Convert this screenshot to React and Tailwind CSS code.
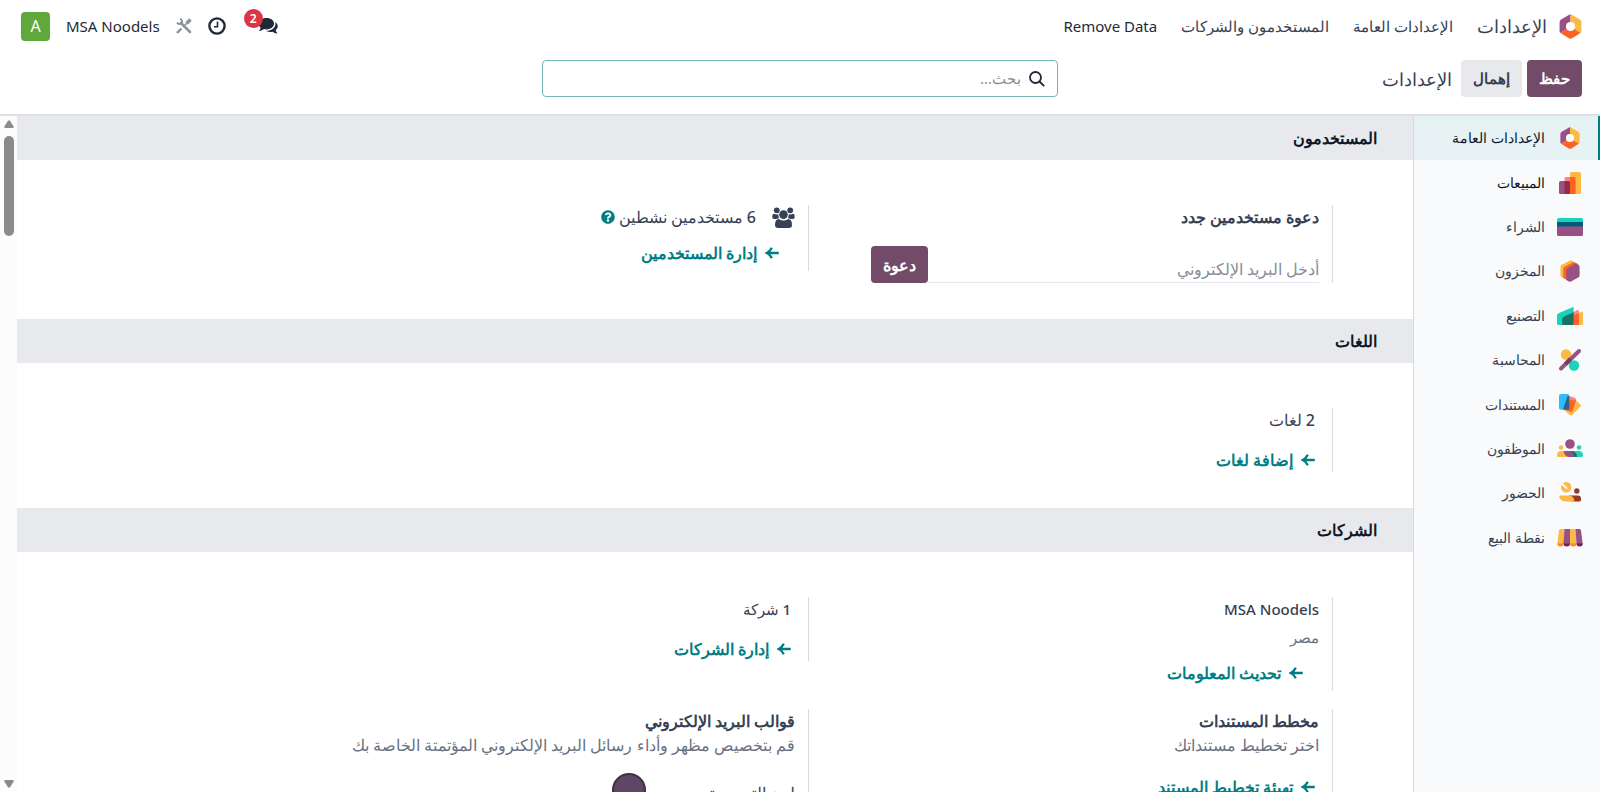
import { FaQuestionCircle } from 'react-icons/fa'

function SettingsIcon({ className }) {
  return (
    <svg viewBox="0 0 24 26" className={className}>
      <path d="M12 0 L2.2 5.6 Q0.6 6.600 0.6 8.400 V17.600 Q0.6 19 1.600 19.800 L12 13 Z" fill="#985184" />
      <path d="M12 0 L21.800 5.600 Q23.400 6.600 23.400 8.400 V17.600 Q23.400 19 22.400 19.800 L12 13 Z" fill="#fbb945" />
      <path d="M1.600 19.800 L12 13 L22.400 19.800 L13.600 25.300 Q12 26.300 10.400 25.300 Z" fill="#fc6222" />
      <circle cx="12" cy="13" r="4.800" fill="#fff" />
    </svg>
  )
}

function SalesIcon({ className }) {
  return (
    <svg viewBox="0 0 26 26" className={className}>
      <rect x="13" y="2" width="11" height="22" rx="1.500" fill="#fbb945" />
      <rect x="7.500" y="7" width="11" height="17" rx="1.500" fill="#ff8086" />
      <path d="M13 7h4q1.500 0 1.500 1.500V24H13z" fill="#fc6222" />
      <rect x="2" y="11" width="11" height="13" rx="1.500" fill="#985184" />
      <path d="M7.500 11h4q1.500 0 1.500 1.500V24H7.500z" fill="#962b48" />
    </svg>
  )
}

function PurchaseIcon({ className }) {
  return (
    <svg viewBox="0 0 26 26" className={className}>
      <path d="M0 8.500V6Q0 4 2 4H24.500Q26 4 26 5.500V8.500z" fill="#1ad3bb" />
      <path d="M0 8h26v5H0z" fill="#005e7a" />
      <path d="M0 12.500h26V20.500q0 1.500-1.500 1.500H1.500Q0 22 0 20.500z" fill="#985184" />
    </svg>
  )
}

function InventoryIcon({ className }) {
  return (
    <svg viewBox="0 0 26 26" className={className}>
      <path d="M13 2.500 L4.500 7 Q3.500 7.700 3.500 9 V17.500 Q3.500 18.500 4.500 19 L8 21 L20 5.500 L14.500 2.500 Q13.700 2 13 2.500z" fill="#fbb945" />
      <path d="M15.500 4.500 L7.300 9 Q6.300 9.700 6.300 11 V20 L10 22 L21 6 L18 4.500 Q16.700 3.800 15.500 4.500z" fill="#fc6222" />
      <path d="M17 6.500 Q18.500 5.500 20 6 L21.600 7 Q22.600 7.700 22.600 9 V17.500 Q22.600 18.700 21.600 19.300 L14 23.500 Q13 24 12 23.500 L9.300 22 V12.500 Q9.300 11 10.500 10.200z" fill="#985184" />
    </svg>
  )
}

function ManufacturingIcon({ className }) {
  return (
    <svg viewBox="0 0 26 26" className={className}>
      <path d="M16 13 L25 8.500 Q26 8.200 26 9.500 V20.500 Q26 22 24.500 22 H16z" fill="#fbb945" />
      <path d="M11 12 L20.500 7 Q21.800 6.500 21.800 8 V22 H11z" fill="#ff8086" />
      <path d="M17 12.500 L21.800 10 V22 H17z" fill="#fc6222" />
      <path d="M0 12.500 Q0 11 1.500 10.200 L15.500 4.200 Q16.700 4 16.700 5.200 V22 H1.500 Q0 22 0 20.500z" fill="#1ad3bb" />
      <path d="M5.200 16 Q5.200 14.500 6.700 13.700 L16.700 9.200 V20.500 Q16.700 22 15.200 22 H5.200z" fill="#1a6f66" />
    </svg>
  )
}

function AccountingIcon({ className }) {
  return (
    <svg viewBox="0 0 26 26" className={className}>
      <circle cx="9" cy="7.500" r="5.200" fill="#fbb945" />
      <circle cx="17" cy="18.500" r="5.200" fill="#1ad3bb" />
      <path d="M4 21.500 L22 4" stroke="#985184" strokeWidth="4" strokeLinecap="round" />
      <path d="M8.500 17 L13.500 12" stroke="#7d3a62" strokeWidth="4" />
    </svg>
  )
}

function DocumentsIcon({ className }) {
  return (
    <svg viewBox="0 0 26 26" className={className}>
      <path d="M19 8.500 L23.500 12.500 Q24.300 13.500 23.500 14.500 L15 23 Q14 24 13 23 L7 18z" fill="#fbb945" />
      <path d="M11 3.500 L17.500 5.800 Q19.500 6.500 19 8.500 L15.500 18.500 Q15 20 13.300 19.500 L7 17.200z" fill="#ff8086" />
      <path d="M12.500 8 L19 8.500 L15.500 18.500 Q15 20 13.300 19.500 L7.500 17.500z" fill="#fc6222" />
      <path d="M4 2 H10.500 Q12.300 2 12.300 4 V8 L8.500 17.800 H4 Q2 17.800 2 16 V4 Q2 2 4 2z" fill="#2ebcfa" />
      <path d="M10.500 4 L12.300 4.500 V16 Q12.300 17.500 10.500 17.700 L6 17.500z" fill="#2d6388" />
    </svg>
  )
}

function EmployeesIcon({ className }) {
  return (
    <svg viewBox="0 0 26 26" className={className}>
      <circle cx="13" cy="8" r="4.800" fill="#985184" />
      <circle cx="4" cy="11.500" r="2.200" fill="#fbb945" />
      <circle cx="22" cy="11.500" r="2.200" fill="#1ad3bb" />
      <path d="M4 15 H13 V21 H1.500 Q0 21 0 19.500 Q0 15 4 15z" fill="#fbb945" />
      <path d="M12 15 H22.500 Q26 15.500 26 19.500 Q26 21 24.500 21 H16z" fill="#1ad3bb" />
      <path d="M6.500 15 H14.500 Q19.500 16 20 21 H12 Q7.500 20.500 6.500 15z" fill="#985184" />
      <path d="M14.500 15 H16 Q20 17 20 21 H17.500z" fill="#1a6f66" />
    </svg>
  )
}

function AttendanceIcon({ className }) {
  return (
    <svg viewBox="0 0 26 26" className={className}>
      <circle cx="9.200" cy="7.200" r="5.200" fill="#fbb945" />
      <path d="M5.500 4.500 L9.500 8" stroke="#f9fafb" strokeWidth="2" strokeLinecap="round" />
      <circle cx="19.800" cy="11" r="2.700" fill="#953b24" />
      <path d="M12 15.500 H21 Q24 15.500 24 18.500 V20 Q24 21.500 22.500 21.500 H14z" fill="#953b24" />
      <path d="M3 15.500 H12.500 Q17 16 17.500 21.500 H9 Q3.500 21.500 2.200 16.800 Q2 15.500 3 15.500z" fill="#fbb945" />
    </svg>
  )
}

function PosIcon({ className }) {
  return (
    <svg viewBox="0 0 26 26" className={className}>
      <path d="M3.500 4 H7.500 V19 H0.300 L2 5.500 Q2.200 4 3.500 4z" fill="#fbb945" />
      <path d="M7.500 4 H13 V19 H6.500z" fill="#985184" />
      <path d="M13 4 H18.500 L19.500 19 H13z" fill="#fbb945" />
      <path d="M18.500 4 H22.500 Q23.800 4 24 5.500 L25.700 19 H19.500z" fill="#985184" />
      <path d="M0.200 18.500 H6.500 Q6.500 21.500 3.400 21.500 Q0.200 21.500 0.200 18.500z M13 18.500 H19.500 Q19.500 21.500 16.200 21.500 Q13 21.500 13 18.500z" fill="#fc8a1c" />
      <path d="M6.500 18.500 H13 Q13 21.500 9.700 21.500 Q6.500 21.500 6.500 18.500z M19.500 18.500 H25.800 Q25.800 21.500 22.600 21.500 Q19.500 21.500 19.500 18.500z" fill="#6b1f5c" />
    </svg>
  )
}

function ArrowIcon() {
  return (
    <svg viewBox="0 0 14 14" className="w-3.5 h-3.5 shrink-0" fill="none" stroke="currentColor" strokeWidth="2.400">
      <path d="M13.800 7 H2 M6.800 1.800 Q5 5.500 1.800 7 Q5 8.500 6.800 12.200" />
    </svg>
  )
}

function UsersIcon() {
  return (
    <svg viewBox="0 0 23 21" className="w-[23px] h-[21px] shrink-0" fill="currentColor">
      <circle cx="4.800" cy="3.300" r="2.900" />
      <circle cx="18.200" cy="3.300" r="2.900" />
      <path d="M2 6.800 Q4.500 8.200 6.300 7 Q6 9.800 7.200 11 Q5.500 11.300 4.500 12 H2 Q0.300 12 0.300 10 Q0.300 6.800 2 6.800z" />
      <path d="M21 6.800 Q18.500 8.200 16.700 7 Q17 9.800 15.800 11 Q17.500 11.300 18.500 12 H21 Q22.700 12 22.700 10 Q22.700 6.800 21 6.800z" />
      <circle cx="11.500" cy="7.600" r="4.300" />
      <path d="M6.800 12 Q11.500 15.200 16.200 12 Q20 12 20 18 Q20 21 17 21 H6 Q3 21 3 18 Q3 12 6.800 12z" />
    </svg>
  )
}

function CommentsIcon() {
  return (
    <svg viewBox="0 0 20 18" className="w-5 h-[18px]" fill="currentColor">
      <path d="M8.500 1 C13 1 16 3.400 16 6.600 C16 10 13 12.400 8.500 12.400 Q7.200 12.400 6 12.100 Q4 13.800 1.500 14 Q0.800 14 1.200 13.400 Q2.500 12.200 2.600 10.800 Q0.600 9 0.600 6.600 C0.600 3.400 4 1 8.500 1z" />
      <path d="M17.300 5 Q19.800 6.700 19.800 9.300 Q19.800 11.600 17.800 13.100 Q17.900 14.700 19.200 16 Q19.500 16.600 18.800 16.600 Q16.500 16.400 14.600 14.800 Q11 15.600 8 13.800 C13.500 13.900 18.500 10.500 17.300 5z" />
    </svg>
  )
}

const apps = [
  { name: 'الإعدادات العامة', Icon: SettingsIcon, active: true },
  { name: 'المبيعات', Icon: SalesIcon, dark: true },
  { name: 'الشراء', Icon: PurchaseIcon },
  { name: 'المخزون', Icon: InventoryIcon },
  { name: 'التصنيع', Icon: ManufacturingIcon },
  { name: 'المحاسبة', Icon: AccountingIcon },
  { name: 'المستندات', Icon: DocumentsIcon },
  { name: 'الموظفون', Icon: EmployeesIcon },
  { name: 'الحضور', Icon: AttendanceIcon },
  { name: 'نقطة البيع', Icon: PosIcon },
]

function Navbar() {
  return (
    <nav className="flex items-center justify-between h-[52px] ps-[18px] pe-[21px] text-[15px] text-gray-700">
      <div className="flex items-center gap-6">
        <a href="#settings" className="flex items-center gap-3 text-lg">
          <SettingsIcon className="w-[23px] h-[25px]" />
          الإعدادات
        </a>
        <a href="#general">الإعدادات العامة</a>
        <a href="#users">المستخدمون والشركات</a>
        <a href="#remove" className="text-gray-800">Remove Data</a>
      </div>
      <div className="flex items-center text-gray-800">
        <button type="button" aria-label="المحادثات" className="relative me-8">
          <CommentsIcon />
          <span className="absolute -top-2 left-[-14px] flex items-center justify-center w-[19px] h-[19px] rounded-full bg-[#dc3545] text-xs font-semibold text-white">2</span>
        </button>
        <button type="button" aria-label="الأنشطة" className="me-4">
          <svg viewBox="0 0 18 18" className="w-[18px] h-[18px]" fill="none" stroke="currentColor">
            <circle cx="9" cy="9" r="7.600" strokeWidth="2.400" />
            <path d="M9.500 4.500 V9.700 H6" strokeWidth="1.600" />
          </svg>
        </button>
        <button type="button" aria-label="الأدوات" className="me-4 text-[#8d9399]">
          <svg viewBox="0 0 16 16" className="w-4 h-4" fill="none" stroke="currentColor">
            <path d="M5 5 L14 14" strokeWidth="2.600" strokeLinecap="round" />
            <path d="M1 4.500 Q2 6.500 4.500 6 Q6.500 5 6 2.800 Q5.500 1 4 1" strokeWidth="2" />
            <path d="M10.500 5.500 L14.500 1.500" strokeWidth="3.600" />
            <path d="M10.500 5.500 L7 9" strokeWidth="1.400" />
            <path d="M5.500 10.500 L1 15" strokeWidth="2.400" />
          </svg>
        </button>
        <span className="me-4">MSA Noodels</span>
        <span className="flex items-center justify-center w-[29px] h-[29px] rounded bg-[#60a83c] text-base text-white">A</span>
      </div>
    </nav>
  )
}

function ControlPanel() {
  return (
    <div className="grid grid-cols-[1fr_516px_1fr] items-center px-[18px] pt-2 pb-[17px] border-b-2 border-[#dee0e4] text-[15px]">
      <div className="flex items-center gap-[5px]">
        <button type="button" className="h-[37px] px-3 rounded bg-[#714b67] font-semibold text-white">حفظ</button>
        <button type="button" className="h-[37px] px-3 rounded bg-[#e7e9ed] font-semibold text-gray-700">إهمال</button>
        <span className="ms-1 text-lg text-gray-700">الإعدادات</span>
      </div>
      <label className="flex items-center gap-2 h-[37px] px-3 border border-[#71b5b9] rounded">
        <svg viewBox="0 0 16 16" className="w-4 h-4 text-gray-800" fill="none" stroke="currentColor" strokeWidth="1.800">
          <circle cx="6.500" cy="6.500" r="5.500" />
          <path d="M10.500 10.500 L15.200 15.200" />
        </svg>
        <input type="text" aria-label="بحث" placeholder="بحث..." className="flex-1 outline-none placeholder:text-[#8a8e95]" />
      </label>
    </div>
  )
}

function Sidebar() {
  return (
    <aside className="w-[187px] shrink-0 border-e border-[#d8dadd] bg-[#f9fafb]">
      <ul className="grid auto-rows-fr h-[444px]">
        {apps.map(({ name, Icon, active, dark }) => (
          <li key={name} className="flex">
            <a
              href="#app"
              className={
                active
                  ? 'flex flex-1 items-center gap-3 ps-[15px] border-s-2 border-[#017e84] bg-[#e6f2f3] text-sm text-gray-900'
                  : dark
                    ? 'flex flex-1 items-center gap-3 ps-[17px] text-sm text-gray-900'
                    : 'flex flex-1 items-center gap-3 ps-[17px] text-sm text-gray-700'
              }
            >
              <Icon className={active ? 'w-[26px] h-[22px]' : 'w-[26px] h-[26px]'} />
              {name}
            </a>
          </li>
        ))}
      </ul>
    </aside>
  )
}

function Section({ title, children }) {
  return (
    <section>
      <h2 className="flex items-center h-11 ps-9 bg-[#e7e9ed] text-base font-semibold text-gray-900">{title}</h2>
      <div className="grid grid-cols-2 items-start gap-y-[18px] max-w-[1128px] pt-[45px] pb-9 ps-20">{children}</div>
    </section>
  )
}

function Setting({ children }) {
  return <div className="border-s border-[#d8dadd] ps-[13px]">{children}</div>
}

function ActionLink({ children }) {
  return (
    <a href="#action" className="flex items-center gap-2 font-semibold text-[#017e84]">
      <ArrowIcon />
      {children}
    </a>
  )
}

function Scrollbar() {
  return (
    <div className="flex flex-col items-center justify-between w-[17px] shrink-0 py-1 bg-[#fcfcfc]">
      <div className="flex flex-col items-center gap-2">
        <svg viewBox="0 0 10 8" className="w-2.5 h-2" fill="#8b8b8b">
          <path d="M4 0.800 Q5 -0.400 6 0.800 L9.700 6.500 Q10 8 8.800 8 H1.200 Q0 8 0.300 6.500z" />
        </svg>
        <div className="w-2.5 h-[100px] rounded-full bg-[#8b8b8b]" />
      </div>
      <svg viewBox="0 0 10 8" className="w-2.5 h-2" fill="#8b8b8b">
        <path d="M4 7.200 Q5 8.400 6 7.200 L9.700 1.500 Q10 0 8.800 0 H1.200 Q0 0 0.300 1.500z" />
      </svg>
    </div>
  )
}

export default function App() {
  return (
    <div dir="rtl" className="flex flex-col h-screen overflow-hidden bg-white font-['Noto_Sans','Open_Sans',sans-serif] text-base text-gray-700">
      <Navbar />
      <ControlPanel />
      <div className="flex flex-1 min-h-0">
        <Sidebar />
        <main className="flex-1 min-w-0 overflow-hidden">
          <Section title="المستخدمون">
            <Setting>
              <label htmlFor="invite" className="block font-semibold">دعوة مستخدمين جدد</label>
              <div className="flex items-end mt-[17px] me-[62px]">
                <input
                  id="invite"
                  type="email"
                  placeholder="أدخل البريد الإلكتروني"
                  className="flex-1 h-7 border-b border-gray-200 text-right outline-none placeholder:text-[#8a8e95]"
                />
                <button type="button" className="h-[37px] px-3 rounded bg-[#714b67] font-semibold text-white">دعوة</button>
              </div>
            </Setting>
            <Setting>
              <div className="flex items-center h-6 font-medium">
                <UsersIcon />
                <span className="ms-4">6 مستخدمين نشطين</span>
                <FaQuestionCircle className="w-3.5 h-3.5 ms-1 text-[#017e84]" />
              </div>
              <div className="mt-3 mb-1.5 ms-4">
                <ActionLink>إدارة المستخدمين</ActionLink>
              </div>
            </Setting>
          </Section>

          <Section title="اللغات">
            <Setting>
              <p className="ms-1 font-medium">2 لغات</p>
              <div className="mt-4 ms-1">
                <ActionLink>إضافة لغات</ActionLink>
              </div>
            </Setting>
          </Section>

          <Section title="الشركات">
            <Setting>
              <p className="text-[15px] leading-6 font-medium">MSA Noodels</p>
              <p className="mt-1 text-[15px] leading-6 text-gray-500">مصر</p>
              <div className="mt-3 mb-1.5 ms-4">
                <ActionLink>تحديث المعلومات</ActionLink>
              </div>
            </Setting>
            <Setting>
              <p className="ms-1 text-[15px] leading-6 font-medium">1 شركة</p>
              <div className="mt-4 ms-1">
                <ActionLink>إدارة الشركات</ActionLink>
              </div>
            </Setting>
            <Setting>
              <p className="font-semibold">مخطط المستندات</p>
              <p className="text-gray-500">اختر تخطيط مستنداتك</p>
              <div className="mt-[18px] ms-1">
                <ActionLink>تهيئة تخطيط المستند</ActionLink>
              </div>
            </Setting>
            <Setting>
              <p className="font-semibold">قوالب البريد الإلكتروني</p>
              <p className="text-gray-500">قم بتخصيص مظهر وأداء رسائل البريد الإلكتروني المؤتمتة الخاصة بك</p>
              <div className="flex items-start mt-4">
                <span className="w-[149px] pt-2">لون الترويسة</span>
                <button type="button" aria-label="لون الترويسة" className="w-[34px] h-[34px] rounded-full border-2 border-[#432f46] bg-[#5f4664]" />
              </div>
            </Setting>
          </Section>
        </main>
        <Scrollbar />
      </div>
    </div>
  )
}
